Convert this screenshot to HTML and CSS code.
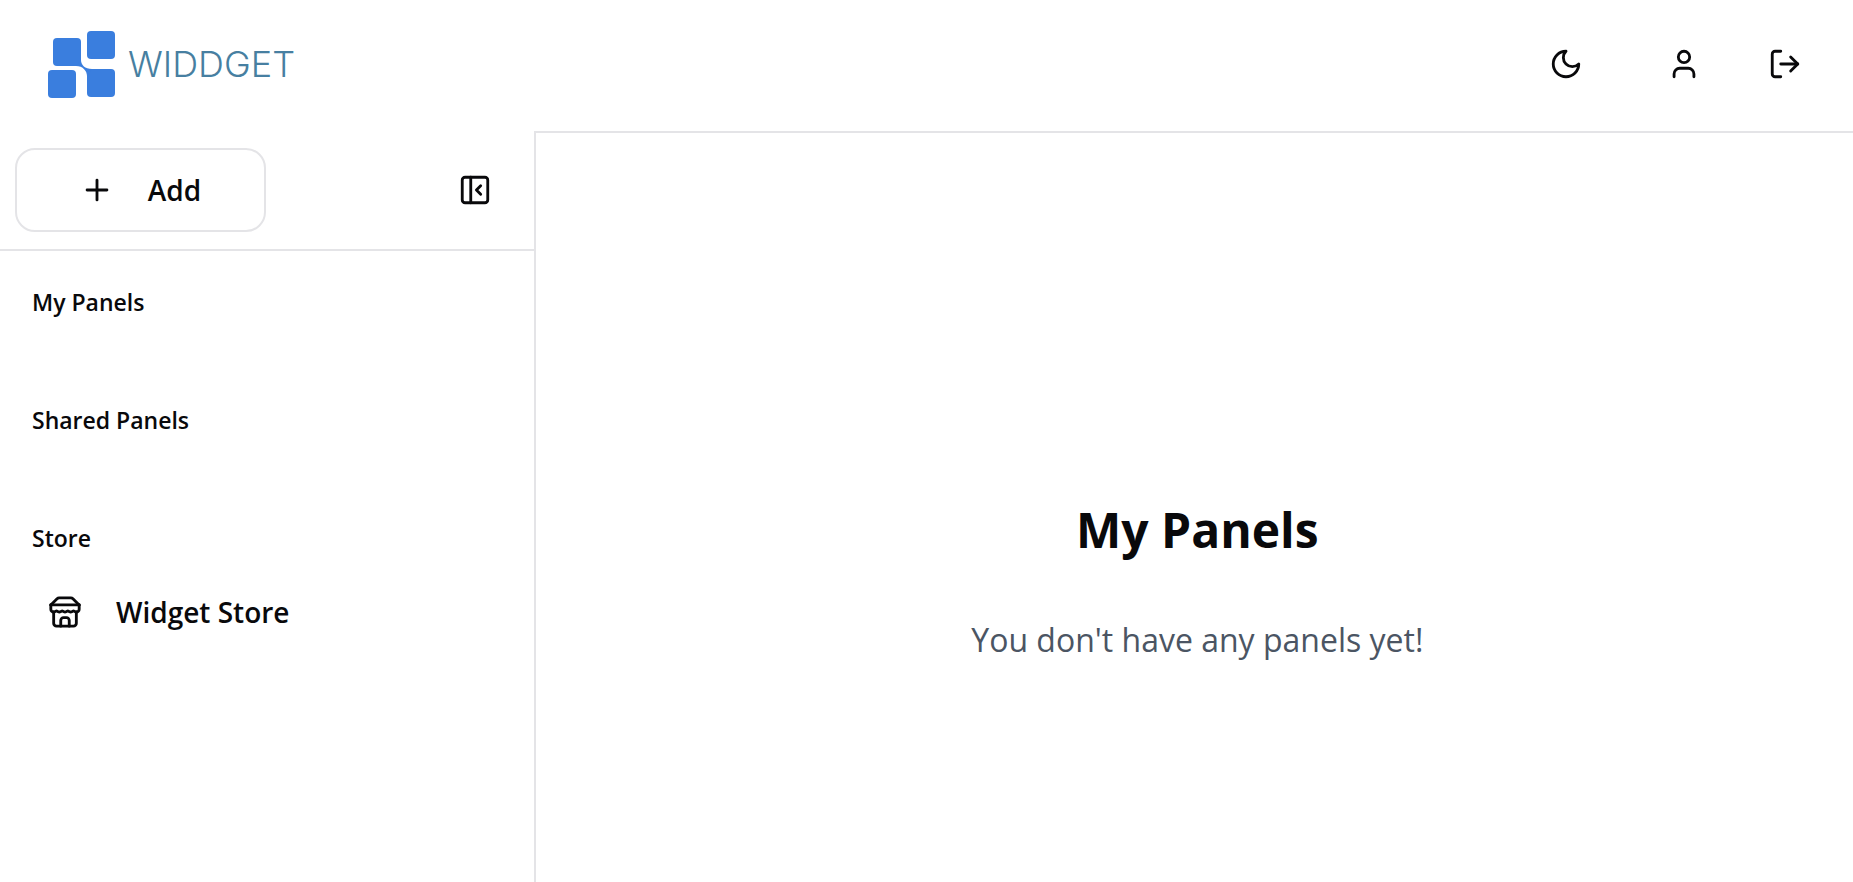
FILE: index.html
```html
<!DOCTYPE html>
<html lang="en">

<head>
    <meta charset="UTF-8">
    <meta name="viewport" content="width=device-width, initial-scale=1.0">
    <title>Widdget</title>
    <link rel="stylesheet" href="styles.css">
</head>

<body>
    <header class="header">
        <a href="#" class="logo">
            <svg class="logo-mark" viewBox="0 -1 68 68" aria-hidden="true">
                <rect x="5" y="7" width="28" height="28" rx="4" />
                <rect x="39" y="0" width="28" height="28" rx="4" />
                <rect x="0" y="39" width="28" height="28" rx="4" />
                <rect x="39" y="38" width="28" height="28" rx="4" />
                <path d="M33 29c0 5 4 9 11 9l-5 7c0-5-4-10-11-10z" />
            </svg>
            <span class="logo-text">WIDDGET</span>
        </a>
        <nav class="header-actions">
            <button type="button" class="icon-btn theme-btn" aria-label="Toggle theme">
                <svg class="icon" viewBox="0 0 24 24"><path d="M12 3a6 6 0 0 0 9 9 9 9 0 1 1-9-9Z" /></svg>
            </button>
            <button type="button" class="icon-btn" aria-label="Profile">
                <svg class="icon" viewBox="0 0 24 24"><path d="M19 21v-2a4 4 0 0 0-4-4H9a4 4 0 0 0-4 4v2" /><circle cx="12" cy="7" r="4" /></svg>
            </button>
            <button type="button" class="icon-btn" aria-label="Log out">
                <svg class="icon" viewBox="0 0 24 24"><path d="M9 21H5a2 2 0 0 1-2-2V5a2 2 0 0 1 2-2h4" /><path d="m16 17 5-5-5-5" /><path d="M21 12H9" /></svg>
            </button>
        </nav>
    </header>
    <div class="page">
        <aside class="sidebar">
            <div class="sidebar-top">
                <button type="button" class="add-btn">
                    <svg class="icon" viewBox="0 0 24 24"><path d="M5 12h14" /><path d="M12 5v14" /></svg>
                    Add
                </button>
                <button type="button" class="icon-btn" aria-label="Collapse sidebar">
                    <svg class="icon" viewBox="0 0 24 24"><rect x="3" y="3" width="18" height="18" rx="2" /><path d="M9 3v18" /><path d="m16 15-3-3 3-3" /></svg>
                </button>
            </div>
            <div class="sidebar-menu">
                <section class="menu-group">
                    <h2 class="menu-title">My Panels</h2>
                </section>
                <section class="menu-group">
                    <h2 class="menu-title">Shared Panels</h2>
                </section>
                <section class="menu-group">
                    <h2 class="menu-title">Store</h2>
                    <a href="#" class="menu-link">
                        <svg class="icon" viewBox="0 0 24 24">
                            <path d="m2 7 4.41-4.41A2 2 0 0 1 7.83 2h8.34a2 2 0 0 1 1.42.59L22 7" />
                            <path d="M4 12v8a2 2 0 0 0 2 2h12a2 2 0 0 0 2-2v-8" />
                            <path d="M15 22v-4a2 2 0 0 0-2-2h-2a2 2 0 0 0-2 2v4" />
                            <path d="M2 7h20" />
                            <path d="M22 7v3a2 2 0 0 1-2 2a2.7 2.7 0 0 1-1.59-.63.7.7 0 0 0-.82 0A2.7 2.7 0 0 1 16 12a2.7 2.7 0 0 1-1.59-.63.7.7 0 0 0-.82 0A2.7 2.7 0 0 1 12 12a2.7 2.7 0 0 1-1.59-.63.7.7 0 0 0-.82 0A2.7 2.7 0 0 1 8 12a2.7 2.7 0 0 1-1.59-.63.7.7 0 0 0-.82 0A2.7 2.7 0 0 1 4 12a2 2 0 0 1-2-2V7" />
                        </svg>
                        Widget Store
                    </a>
                </section>
            </div>
        </aside>
        <main class="content">
            <h1 class="content-title">My Panels</h1>
            <p class="content-text">You don't have any panels yet!</p>
        </main>
    </div>
</body>

</html>
```
FILE: styles.css
```css
* {
    box-sizing: border-box;
}

body {
    display: flex;
    flex-direction: column;
    min-height: 100vh;
    margin: 0;
    background-color: #fff;
    color: #09090b;
    font-family: "Open Sans", "Noto Sans", sans-serif;
}

h1,
h2,
p {
    margin: 0;
}

a {
    color: inherit;
    text-decoration: none;
}

button {
    padding: 0;
    border: 0;
    background: none;
    color: inherit;
    font: inherit;
    cursor: pointer;
}

.icon {
    width: 34px;
    height: 34px;
    flex: none;
    fill: none;
    stroke: currentColor;
    stroke-width: 2;
    stroke-linecap: round;
    stroke-linejoin: round;
}

.icon-btn {
    display: flex;
    align-items: center;
    justify-content: center;
    width: 68px;
    height: 68px;
}

/* header */
.header {
    display: flex;
    align-items: center;
    justify-content: space-between;
    padding: 30px 34px 33px 48px;
}

.logo {
    display: flex;
    align-items: center;
    gap: 12px;
}

.logo-mark {
    width: 68px;
    height: 68px;
    fill: #3a7ede;
}

.logo-text {
    color: #477fa1;
    font-family: Inter, sans-serif;
    font-size: 36px;
    font-weight: 350;
    line-height: 40px;
}

.header-actions {
    display: flex;
    gap: 33px;
}

.theme-btn {
    margin-right: 17px;
}

/* sidebar */
.page {
    display: flex;
    flex: 1;
}

.sidebar {
    width: 28.8%;
    min-width: 400px;
}

.sidebar-top {
    display: flex;
    align-items: center;
    justify-content: space-between;
    padding: 17px 25px 17px 15px;
    border-bottom: 2px solid #e4e4e7;
}

.add-btn {
    display: flex;
    align-items: center;
    justify-content: center;
    gap: 34px;
    width: 251px;
    height: 84px;
    border: 2px solid #e4e4e7;
    border-radius: 20px;
    font-size: 28px;
    font-weight: 600;
}

.sidebar-menu {
    display: flex;
    flex-direction: column;
    gap: 82px;
    padding: 33px 32px;
}

.menu-title {
    font-size: 23px;
    font-weight: 600;
    line-height: 36px;
}

.menu-link {
    display: flex;
    align-items: center;
    gap: 34px;
    padding: 36px 16px;
    font-size: 28px;
    font-weight: 600;
    line-height: 40px;
}

/* content */
.content {
    display: flex;
    flex: 1;
    flex-direction: column;
    align-items: center;
    justify-content: center;
    gap: 52px;
    padding: 176px 32px 32px 38px;
    border-top: 2px solid #e4e4e7;
    border-left: 2px solid #e4e4e7;
    text-align: center;
}

.content-title {
    font-size: 48px;
    font-weight: 700;
    line-height: 68px;
}

.content-text {
    color: #4b5563;
    font-size: 32px;
    line-height: 48px;
}
```
